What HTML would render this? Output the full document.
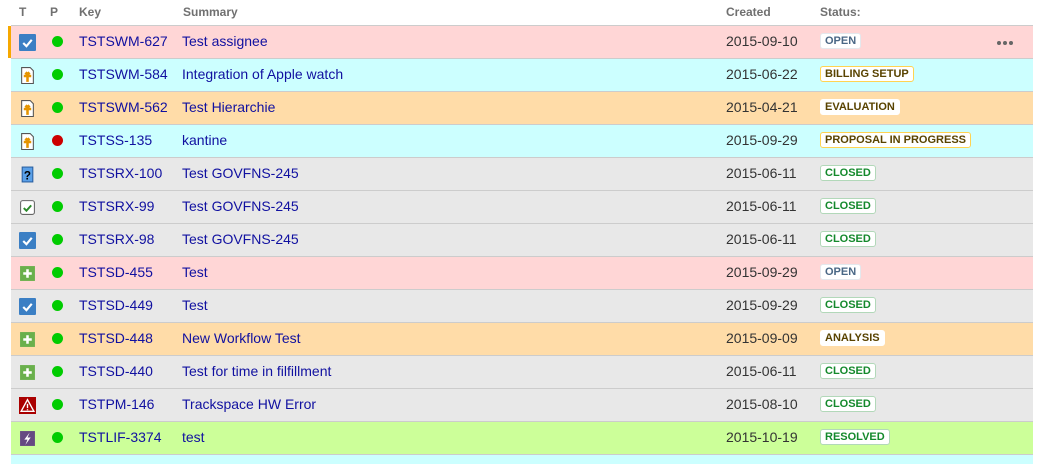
<!DOCTYPE html>
<html><head><meta charset="utf-8"><style>
html,body{margin:0;width:1042px;height:464px;overflow:hidden;background:#fff;font-family:"Liberation Sans",Arial,sans-serif;position:relative}
.h{position:absolute;top:5px;font-size:12px;font-weight:bold;color:#707070}
.r{position:absolute;left:11px;width:1022px;height:32px;border-top:1px solid #ccc}
.r span{position:absolute;top:7px;font-size:14px;line-height:16px}
.k{left:68px;color:#1010a0}
.s{left:171px;color:#1010a0}
.c{left:715px;color:#333}
.d{position:absolute;left:41px;top:10px;width:11px;height:11px;border-radius:50%;background:#00cc00}
.i{position:absolute;left:8px;top:8px;width:17px;height:17px}
.l{position:absolute;left:809px;top:7px;height:14px;line-height:14px;padding:0 4px;border:1px solid;border-radius:3px;background:#fff;font-size:11px;font-weight:bold;letter-spacing:0}
.o{color:#4a6785;border-color:#e4e8ed}
.y{color:#594300;border-color:#ffd351}
.g{color:#14892c;border-color:#b2d8b9}
</style></head><body>
<div class="h" style="left:19px">T</div><div class="h" style="left:50px">P</div><div class="h" style="left:79px">Key</div><div class="h" style="left:183px">Summary</div><div class="h" style="left:726px">Created</div><div class="h" style="left:820px">Status:</div>

<svg width="0" height="0" style="position:absolute"><defs>
<symbol id="chk" viewBox="0 0 16 16"><rect width="16" height="16" rx="1" fill="#3b7fc4"/><path d="M4 8.5l3 3 5-6" stroke="#fff" stroke-width="2" fill="none"/></symbol>
<symbol id="doc" viewBox="0 0 16 16"><path d="M2.5 .5h8l3 3v12h-11z" fill="#fff" stroke="#555"/><path d="M8 5v9M4.5 8.5h7M8 5l-2 2M8 5l2 2" stroke="#e59400" stroke-width="2.4" fill="none"/></symbol>
<symbol id="q" viewBox="0 0 16 16"><rect x="3" y="1" width="10" height="14" fill="#5aa0e8" stroke="#2a5fa0"/><text x="8" y="12.5" font-size="11" font-weight="bold" text-anchor="middle" fill="#000" font-family="Liberation Sans">?</text></symbol>
<symbol id="tk" viewBox="0 0 16 16"><rect x="1.5" y="1.5" width="13" height="13" rx="2" fill="#fff" stroke="#666"/><path d="M4.5 8.5l2.5 2.5 4.5-5" stroke="#2a8a2a" stroke-width="1.8" fill="none"/></symbol>
<symbol id="pl" viewBox="0 0 16 16"><rect x="1" y="1" width="14" height="14" fill="#6ab04c"/><path d="M8 4v8M4 8h8" stroke="#fff" stroke-width="2.4"/></symbol>
<symbol id="er" viewBox="0 0 16 16"><rect width="16" height="16" fill="#a00"/><path d="M8 2.5l6 11H2z" fill="none" stroke="#fff" stroke-width="1.3"/><path d="M8 6.5v4M8 11.5v1" stroke="#fff" stroke-width="1.3"/></symbol>
<symbol id="bo" viewBox="0 0 16 16"><rect x="1" y="1" width="14" height="14" fill="#654982"/><path d="M10 2.5L5 9h3l-2 5 5-7H8z" fill="#fff"/></symbol>
</defs></svg>

<div class="r" style="top:25px;background:#ffd6d6"><div style="position:absolute;left:-3px;top:0;width:3px;height:32px;background:#f6a800"></div><svg class="i"><use href="#chk"/></svg><div class="d"></div><span class="k">TSTSWM-627</span><span class="s">Test assignee</span><span class="c">2015-09-10</span><div class="l o">OPEN</div><div style="position:absolute;left:986px;top:15px;font-size:0"><i style="display:inline-block;width:4px;height:4px;border-radius:50%;background:#666;margin-right:2px"></i><i style="display:inline-block;width:4px;height:4px;border-radius:50%;background:#666;margin-right:2px"></i><i style="display:inline-block;width:4px;height:4px;border-radius:50%;background:#666"></i></div></div>
<div class="r" style="top:58px;background:#ccffff"><svg class="i"><use href="#doc"/></svg><div class="d"></div><span class="k">TSTSWM-584</span><span class="s">Integration of Apple watch</span><span class="c">2015-06-22</span><div class="l y">BILLING SETUP</div></div>
<div class="r" style="top:91px;background:#ffdca8"><svg class="i"><use href="#doc"/></svg><div class="d"></div><span class="k">TSTSWM-562</span><span class="s">Test Hierarchie</span><span class="c">2015-04-21</span><div class="l y" style="border-color:#fff">EVALUATION</div></div>
<div class="r" style="top:124px;background:#ccffff"><svg class="i"><use href="#doc"/></svg><div class="d" style="background:#cc0000"></div><span class="k">TSTSS-135</span><span class="s">kantine</span><span class="c">2015-09-29</span><div class="l y">PROPOSAL IN PROGRESS</div></div>
<div class="r" style="top:157px;background:#e8e8e8"><svg class="i"><use href="#q"/></svg><div class="d"></div><span class="k">TSTSRX-100</span><span class="s">Test GOVFNS-245</span><span class="c">2015-06-11</span><div class="l g">CLOSED</div></div>
<div class="r" style="top:190px;background:#e8e8e8"><svg class="i"><use href="#tk"/></svg><div class="d"></div><span class="k">TSTSRX-99</span><span class="s">Test GOVFNS-245</span><span class="c">2015-06-11</span><div class="l g">CLOSED</div></div>
<div class="r" style="top:223px;background:#e8e8e8"><svg class="i"><use href="#chk"/></svg><div class="d"></div><span class="k">TSTSRX-98</span><span class="s">Test GOVFNS-245</span><span class="c">2015-06-11</span><div class="l g">CLOSED</div></div>
<div class="r" style="top:256px;background:#ffd6d6"><svg class="i"><use href="#pl"/></svg><div class="d"></div><span class="k">TSTSD-455</span><span class="s">Test</span><span class="c">2015-09-29</span><div class="l o">OPEN</div></div>
<div class="r" style="top:289px;background:#e8e8e8"><svg class="i"><use href="#chk"/></svg><div class="d"></div><span class="k">TSTSD-449</span><span class="s">Test</span><span class="c">2015-09-29</span><div class="l g">CLOSED</div></div>
<div class="r" style="top:322px;background:#ffdca8"><svg class="i"><use href="#pl"/></svg><div class="d"></div><span class="k">TSTSD-448</span><span class="s">New Workflow Test</span><span class="c">2015-09-09</span><div class="l y" style="border-color:#fff">ANALYSIS</div></div>
<div class="r" style="top:355px;background:#e8e8e8"><svg class="i"><use href="#pl"/></svg><div class="d"></div><span class="k">TSTSD-440</span><span class="s">Test for time in filfillment</span><span class="c">2015-06-11</span><div class="l g">CLOSED</div></div>
<div class="r" style="top:388px;background:#e8e8e8"><svg class="i"><use href="#er"/></svg><div class="d"></div><span class="k">TSTPM-146</span><span class="s">Trackspace HW Error</span><span class="c">2015-08-10</span><div class="l g">CLOSED</div></div>
<div class="r" style="top:421px;background:#ccff99"><svg class="i"><use href="#bo"/></svg><div class="d"></div><span class="k">TSTLIF-3374</span><span class="s">test</span><span class="c">2015-10-19</span><div class="l g">RESOLVED</div></div>
<div class="r" style="top:454px;height:10px;background:#ccffff"></div>
</body></html>
